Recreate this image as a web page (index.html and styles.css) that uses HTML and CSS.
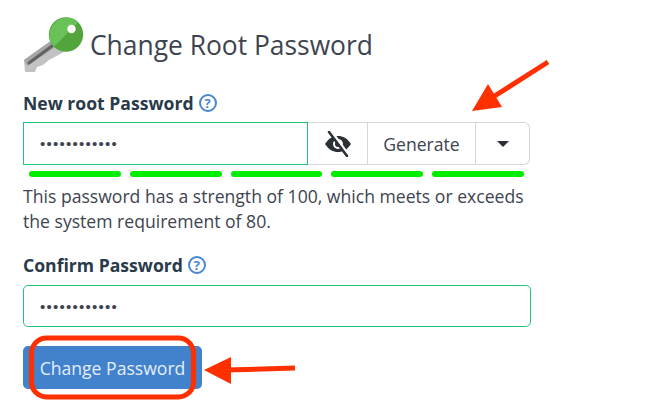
FILE: index.html
```html
<!DOCTYPE html>
<html lang="en">
<head>
    <meta charset="UTF-8">
    <title>Change Root Password</title>
    <link rel="stylesheet" href="styles.css">
</head>
<body>
    <div class="page">
        <!-- Title -->
        <h1 class="title">
            <svg class="key" width="62" height="60" viewBox="23 15 62 60">
                <path d="M24 60 L52 40 L64 52 L49 60 L43 65 L37 67 L35 72 L25 72 Z" fill="#c2c2c2"/>
                <path d="M24 60 L52 40 L57 46 L27 66 Z" fill="#a6a6a6"/>
                <path d="M29 63 L52 46" stroke="#626262" stroke-width="3" stroke-linecap="round"/>
                <circle cx="66" cy="34.5" r="17.2" fill="#52a53a"/>
                <path d="M54 46.7 A17.2 17.2 0 0 1 78.2 22.3 Z" fill="#68c258"/>
                <circle cx="71.5" cy="29" r="4.2" fill="#fff"/>
            </svg>
            Change Root Password
        </h1>

        <!-- New password -->
        <label class="field-label">New root Password <span class="help">?</span></label>
        <div class="input-group">
            <div class="pass-input">••••••••••••</div>
            <button class="addon eye">
                <svg width="28" height="26" viewBox="0 0 28 26">
                    <path d="M1 13 C5 7 9 5 14 5 C19 5 23 7 27 13 C23 19 19 21 14 21 C9 21 5 19 1 13 Z" fill="#2b2f36"/>
                    <circle cx="14" cy="13" r="5" fill="#fff"/>
                    <circle cx="14" cy="13" r="3" fill="#2b2f36"/>
                    <path d="M7 0 L25 25" stroke="#fff" stroke-width="3"/>
                    <path d="M5 1 L23 25" stroke="#2b2f36" stroke-width="2.5" stroke-linecap="round"/>
                </svg>
            </button>
            <button class="addon generate">Generate</button>
            <button class="addon caret-btn"><span class="caret"></span></button>
        </div>
        <div class="meter">
            <span></span><span></span><span></span><span></span><span></span>
        </div>
        <p class="hint">This password has a strength of 100, which meets or exceeds the system requirement of 80.</p>

        <!-- Confirm -->
        <label class="field-label confirm">Confirm Password <span class="help">?</span></label>
        <div class="pass-input single">••••••••••••</div>

        <button class="submit">Change Password</button>
    </div>

    <!-- Annotations over the screenshot -->
    <svg class="marks" width="645" height="412" viewBox="0 0 645 412">
        <path d="M548 62 L493 97" stroke="#ff3000" stroke-width="5" fill="none"/>
        <path d="M488 84 L472 111 L502 107 Z" fill="#ff3000"/>
        <path d="M226 370 L295 368" stroke="#ff3000" stroke-width="5" fill="none"/>
        <path d="M204 370 L231 357 L231 384 Z" fill="#ff3000"/>
        <rect x="31.5" y="338" width="162" height="59" rx="15" fill="none" stroke="#ff3000" stroke-width="5"/>
    </svg>
</body>
</html>
```

FILE: styles.css
```css
/* Base */
body, html {
    margin: 0;
    padding: 0;
    background: #fff;
    font-family: "Open Sans", sans-serif;
    color: #3d4450;
}

.page {
    width: 508px;
    padding: 15px 0 0 23px;
}

/* Title */
.title {
    display: flex;
    align-items: center;
    gap: 5px;
    height: 60px;
    margin: 0 0 16px 0;
    font-size: 26.4px;
    font-weight: 400;
}

.key {
    flex: none;
}

/* Labels */
.field-label {
    display: flex;
    align-items: center;
    gap: 5px;
    height: 24px;
    font-size: 17.6px;
    font-weight: 700;
    color: #293a4a;
    margin-bottom: 7px;
}

.field-label.confirm {
    margin-bottom: 8px;
}

.help {
    box-sizing: border-box;
    display: inline-flex;
    align-items: center;
    justify-content: center;
    width: 18px;
    height: 18px;
    border: 2px solid #4a86d0;
    border-radius: 50%;
    font-size: 13px;
    font-weight: 700;
    color: #4a86d0;
}

/* Inputs */
.input-group {
    display: flex;
    height: 43px;
    width: 507px;
}

.pass-input {
    box-sizing: border-box;
    display: flex;
    align-items: center;
    flex: none;
    width: 285px;
    height: 43px;
    padding-left: 16px;
    border: 1px solid #22c678;
    font-family: "Liberation Sans", sans-serif;
    font-size: 15px;
    letter-spacing: 1.25px;
    color: #3d4450;
}

.pass-input.single {
    width: 508px;
    height: 42px;
    border-radius: 5px;
}

.addon {
    box-sizing: border-box;
    height: 43px;
    padding: 0;
    background: #fff;
    border: 1px solid #d6d6d6;
    border-left: none;
    font-family: "Open Sans", sans-serif;
    font-size: 17.6px;
    color: #3d4450;
    display: flex;
    align-items: center;
    justify-content: center;
}

.eye {
    width: 60px;
}

.generate {
    width: 108px;
}

.caret-btn {
    width: 54px;
    border-radius: 0 6px 6px 0;
}

.caret {
    width: 0;
    height: 0;
    border-left: 6px solid transparent;
    border-right: 6px solid transparent;
    border-top: 6px solid #2b2f36;
}

/* Strength meter */
.meter {
    display: flex;
    gap: 9px;
    margin: 6px 6px 0 6px;
    width: 495px;
}

.meter span {
    flex: 1;
    height: 6px;
    border-radius: 3px;
    background: #00ee00;
}

.hint {
    margin: 7px 0 19px 0;
    font-size: 17.6px;
    line-height: 25px;
    color: #3d4450;
}

/* Button */
.submit {
    display: block;
    box-sizing: border-box;
    width: 179px;
    height: 43px;
    margin-top: 19px;
    padding: 0;
    background: #4281cc;
    border: none;
    border-radius: 5px;
    font-family: "Open Sans", sans-serif;
    font-size: 17.6px;
    color: #e4eefa;
}

/* Red annotations */
.marks {
    position: absolute;
    top: 0;
    left: 0;
    pointer-events: none;
}
```
